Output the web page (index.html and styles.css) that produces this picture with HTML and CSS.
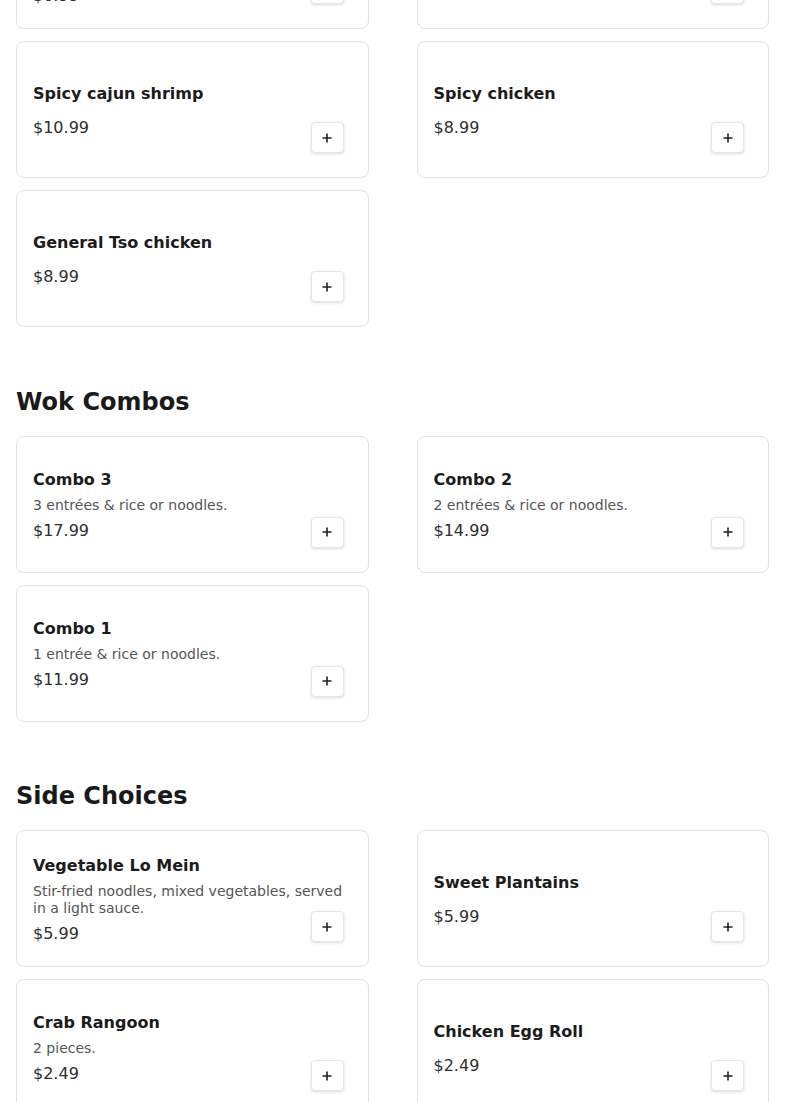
FILE: index.html
```html
<!DOCTYPE html>
<html lang="en">
<head>
<meta charset="utf-8">
<title>Menu</title>
<link rel="stylesheet" href="styles.css">
</head>
<body>
<main class="page">
  <section class="section section-first">
    <div class="grid">
      <div class="card">
        <div class="info">
          <h3 class="name">Orange chicken</h3>
          <p class="desc">Crispy chicken tossed in a sweet and tangy orange glaze sauce.</p>
          <p class="price">$6.99</p>
        </div>
        <button class="add" aria-label="Add"><svg width="10" height="10" viewBox="0 0 10 10"><path d="M5 0.5v9M0.5 5h9" stroke="#1f1f1f" stroke-width="1.6"/></svg></button>
      </div>
      <div class="card">
        <div class="info">
          <h3 class="name">Beef broccoli</h3>
          <p class="price">$9.99</p>
        </div>
        <button class="add" aria-label="Add"><svg width="10" height="10" viewBox="0 0 10 10"><path d="M5 0.5v9M0.5 5h9" stroke="#1f1f1f" stroke-width="1.6"/></svg></button>
      </div>
      <div class="card">
        <div class="info">
          <h3 class="name">Spicy cajun shrimp</h3>
          <p class="price">$10.99</p>
        </div>
        <button class="add" aria-label="Add"><svg width="10" height="10" viewBox="0 0 10 10"><path d="M5 0.5v9M0.5 5h9" stroke="#1f1f1f" stroke-width="1.6"/></svg></button>
      </div>
      <div class="card">
        <div class="info">
          <h3 class="name">Spicy chicken</h3>
          <p class="price">$8.99</p>
        </div>
        <button class="add" aria-label="Add"><svg width="10" height="10" viewBox="0 0 10 10"><path d="M5 0.5v9M0.5 5h9" stroke="#1f1f1f" stroke-width="1.6"/></svg></button>
      </div>
      <div class="card">
        <div class="info">
          <h3 class="name">General Tso chicken</h3>
          <p class="price">$8.99</p>
        </div>
        <button class="add" aria-label="Add"><svg width="10" height="10" viewBox="0 0 10 10"><path d="M5 0.5v9M0.5 5h9" stroke="#1f1f1f" stroke-width="1.6"/></svg></button>
      </div>
    </div>
  </section>

  <section class="section">
    <h2 class="section-title">Wok Combos</h2>
    <div class="grid">
      <div class="card">
        <div class="info">
          <h3 class="name">Combo 3</h3>
          <p class="desc">3 entrées &amp; rice or noodles.</p>
          <p class="price">$17.99</p>
        </div>
        <button class="add" aria-label="Add"><svg width="10" height="10" viewBox="0 0 10 10"><path d="M5 0.5v9M0.5 5h9" stroke="#1f1f1f" stroke-width="1.6"/></svg></button>
      </div>
      <div class="card">
        <div class="info">
          <h3 class="name">Combo 2</h3>
          <p class="desc">2 entrées &amp; rice or noodles.</p>
          <p class="price">$14.99</p>
        </div>
        <button class="add" aria-label="Add"><svg width="10" height="10" viewBox="0 0 10 10"><path d="M5 0.5v9M0.5 5h9" stroke="#1f1f1f" stroke-width="1.6"/></svg></button>
      </div>
      <div class="card">
        <div class="info">
          <h3 class="name">Combo 1</h3>
          <p class="desc">1 entrée &amp; rice or noodles.</p>
          <p class="price">$11.99</p>
        </div>
        <button class="add" aria-label="Add"><svg width="10" height="10" viewBox="0 0 10 10"><path d="M5 0.5v9M0.5 5h9" stroke="#1f1f1f" stroke-width="1.6"/></svg></button>
      </div>
    </div>
  </section>

  <section class="section">
    <h2 class="section-title">Side Choices</h2>
    <div class="grid">
      <div class="card">
        <div class="info">
          <h3 class="name">Vegetable Lo Mein</h3>
          <p class="desc">Stir-fried noodles, mixed vegetables, served in a light sauce.</p>
          <p class="price">$5.99</p>
        </div>
        <button class="add" aria-label="Add"><svg width="10" height="10" viewBox="0 0 10 10"><path d="M5 0.5v9M0.5 5h9" stroke="#1f1f1f" stroke-width="1.6"/></svg></button>
      </div>
      <div class="card">
        <div class="info">
          <h3 class="name">Sweet Plantains</h3>
          <p class="price">$5.99</p>
        </div>
        <button class="add" aria-label="Add"><svg width="10" height="10" viewBox="0 0 10 10"><path d="M5 0.5v9M0.5 5h9" stroke="#1f1f1f" stroke-width="1.6"/></svg></button>
      </div>
      <div class="card">
        <div class="info">
          <h3 class="name">Crab Rangoon</h3>
          <p class="desc">2 pieces.</p>
          <p class="price">$2.49</p>
        </div>
        <button class="add" aria-label="Add"><svg width="10" height="10" viewBox="0 0 10 10"><path d="M5 0.5v9M0.5 5h9" stroke="#1f1f1f" stroke-width="1.6"/></svg></button>
      </div>
      <div class="card">
        <div class="info">
          <h3 class="name">Chicken Egg Roll</h3>
          <p class="price">$2.49</p>
        </div>
        <button class="add" aria-label="Add"><svg width="10" height="10" viewBox="0 0 10 10"><path d="M5 0.5v9M0.5 5h9" stroke="#1f1f1f" stroke-width="1.6"/></svg></button>
      </div>
    </div>
  </section>
</main>
</body>
</html>
```
FILE: styles.css
```css
html, body {
  margin: 0;
  padding: 0;
  background: #ffffff;
}

body {
  font-family: "DejaVu Sans", "Noto Sans", sans-serif;
  color: #1a1a1a;
  overflow: hidden;
}

.page {
  padding: 0 16px 40px;
}

.section + .section {
  margin-top: 60.5px;
}

.section-first .grid {
  margin-top: -108px;
}

.section-title {
  margin: 0 0 20px;
  font-size: 24px;
  line-height: 28px;
  font-weight: 700;
  color: #1a1a1a;
}

.grid {
  display: grid;
  grid-template-columns: 1fr 1fr;
  column-gap: 48px;
  row-gap: 12px;
}

.card {
  position: relative;
  display: flex;
  align-items: center;
  box-sizing: border-box;
  min-height: 137px;
  padding: 16px;
  border: 1px solid #e2e2e2;
  border-radius: 8px;
  background: #fff;
}

.info {
  flex: 1;
  min-width: 0;
  display: flex;
  flex-direction: column;
  padding-top: 1px;
}

.name {
  margin: 0 0 8px;
  font-size: 16px;
  line-height: 19px;
  font-weight: 700;
  color: #1c1c1c;
}

.desc {
  margin: 0;
  font-size: 14px;
  line-height: 17px;
  color: #555555;
}

.price {
  margin: 7px 0 0;
  font-size: 16px;
  line-height: 19px;
  color: #2e2e2e;
}

.add {
  position: absolute;
  right: 24px;
  bottom: 24px;
  display: flex;
  align-items: center;
  justify-content: center;
  box-sizing: border-box;
  width: 33px;
  height: 31px;
  padding: 0;
  border: 1px solid #e6e6e6;
  border-radius: 4px;
  background: #fff;
  box-shadow: 0 1px 3px rgba(0, 0, 0, 0.14);
  cursor: pointer;
}

.add svg {
  display: block;
}
```
